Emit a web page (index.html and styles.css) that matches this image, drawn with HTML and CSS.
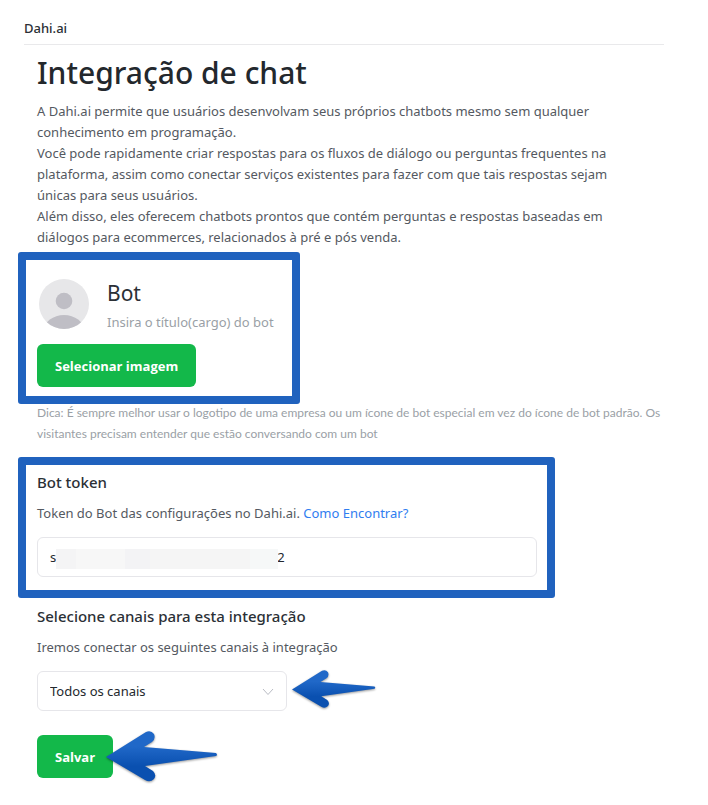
FILE: index.html
```
<!DOCTYPE html>
<html lang="pt-BR">
  <head>
    <meta charset="UTF-8" />
    <meta name="viewport" content="width=device-width, initial-scale=1.0" />
    <title>Dahi.ai - Integração de chat</title>
    <link rel="stylesheet" href="styles.css">
  </head>

  <body>
    <header class="topbar">Dahi.ai</header>

    <main class="content">
      <h1>Integração de chat</h1>
      <div class="description">
        <p>A Dahi.ai permite que usuários desenvolvam seus próprios chatbots mesmo sem qualquer conhecimento em programação.</p>
        <p>Você pode rapidamente criar respostas para os fluxos de diálogo ou perguntas frequentes na plataforma, assim como conectar serviços existentes para fazer com que tais respostas sejam únicas para seus usuários.</p>
        <p>Além disso, eles oferecem chatbots prontos que contém perguntas e respostas baseadas em diálogos para ecommerces, relacionados à pré e pós venda.</p>
      </div>

      <section class="highlight bot">
        <div class="bot-info">
          <svg class="avatar" viewBox="0 0 50 50" aria-hidden="true">
            <clipPath id="round"><circle cx="25" cy="25" r="25" /></clipPath>
            <g clip-path="url(#round)">
              <rect width="50" height="50" fill="#e7e7e9" />
              <circle cx="25" cy="22" r="8.3" fill="#bfbec5" />
              <ellipse cx="25" cy="51" rx="20" ry="15" fill="#bfbec5" />
            </g>
          </svg>
          <div>
            <h2 class="bot-name">Bot</h2>
            <p class="bot-role">Insira o título(cargo) do bot</p>
          </div>
        </div>
        <button class="btn" type="button">Selecionar imagem</button>
      </section>
      <p class="hint">Dica: É sempre melhor usar o logotipo de uma empresa ou um ícone de bot especial em vez do ícone de bot padrão. Os visitantes precisam entender que estão conversando com um bot</p>

      <section class="highlight token">
        <label class="label" for="token">Bot token</label>
        <p class="text">Token do Bot das configurações no Dahi.ai. <a href="#">Como Encontrar?</a></p>
        <div class="token-field">
          <input id="token" type="text" value="s&emsp;&emsp;&emsp;&emsp;&emsp;&emsp;&emsp;&emsp;&emsp;&emsp;&emsp;&emsp;&emsp;&emsp;&emsp;&emsp;&emsp;2">
          <span class="mask"></span>
        </div>
      </section>

      <section class="channels">
        <label class="label" for="channels">Selecione canais para esta integração</label>
        <p class="text">Iremos conectar os seguintes canais à integração</p>
        <div class="select">
          <select id="channels">
            <option>Todos os canais</option>
          </select>
          <svg class="chevron" viewBox="0 0 12 8" aria-hidden="true"><path d="M1 1l5 5.500L11 1" /></svg>
          <svg class="arrow arrow-select" viewBox="0 0 112 52" aria-hidden="true">
            <defs>
              <linearGradient id="blue" x1="0" y1="0" x2="0" y2="1">
                <stop offset="0.300" stop-color="#2068c8" />
                <stop offset="0.700" stop-color="#0a50b0" />
              </linearGradient>
            </defs>
            <path fill="url(#blue)" d="M0 26L40 1Q45-1 48 3Q50 8 46 11L38 16L110 22Q112 24 110 25L39 35L47 40Q51 44 48 48Q44 52 39 49Z" />
          </svg>
        </div>
      </section>

      <div class="actions">
        <button class="btn" type="submit">Salvar</button>
        <svg class="arrow arrow-save" viewBox="0 0 112 52" aria-hidden="true">
          <path fill="url(#blue)" d="M0 26L40 1Q45-1 48 3Q50 8 46 11L38 16L110 22Q112 24 110 25L39 35L47 40Q51 44 48 48Q44 52 39 49Z" />
        </svg>
      </div>
    </main>
  </body>
</html>
```
FILE: styles.css
```
* {
  box-sizing: border-box;
}

body {
  margin: 0;
  background: #fff;
  color: #545961;
  font: 13px/21px "Noto Sans", "Open Sans", sans-serif;
}

h1,
h2,
p {
  margin: 0;
}

.topbar {
  margin: 0 44px 0 24px;
  padding: 18px 0 5px;
  border-bottom: 1px solid #e9e9eb;
  color: #2b3036;
  font-weight: 500;
}

.content {
  padding: 7px 30px 24px 37px;
}

h1 {
  margin-bottom: 8px;
  color: #23282d;
  font-size: 30px;
  font-weight: 500;
  line-height: 41px;
}

.description {
  max-width: 590px;
}

/* thick frame hangs outside the text column */
.highlight {
  width: fit-content;
  max-width: 100%;
  margin-left: -19px;
  border: 8px solid #2062be;
  border-radius: 3px;
}

.bot {
  margin-top: 4px;
  padding: 17px 18px 9px 11px;
}

.bot-info {
  display: flex;
  gap: 18px;
  margin-bottom: 13px;
}

.avatar {
  width: 50px;
  height: 50px;
  margin: 2px 0 0 2px;
}

.bot-name {
  margin-bottom: 4px;
  color: #2b3036;
  font-size: 21px;
  font-weight: 400;
  line-height: 32px;
}

.bot-role {
  line-height: 18px;
  color: #9a9fa6;
}

.btn {
  height: 43px;
  padding: 0 18px;
  border: none;
  border-radius: 6px;
  background: #13b84a;
  color: #fff;
  font: bold 13px "Open Sans", "Noto Sans", sans-serif;
  cursor: pointer;
}

.hint {
  margin-top: -2px;
  color: #9a9fa6;
  font-family: Lato, "Open Sans", sans-serif;
  font-size: 12px;
}

.token {
  margin-top: 13px;
  padding: 7px 10px 13px 11px;
}

.label {
  display: block;
  margin-bottom: 10px;
  color: #2b3036;
  font-size: 15px;
  font-weight: 500;
}

.text {
  margin-bottom: 13px;
}

.text a {
  color: #2f7df0;
  text-decoration: none;
}

.token-field {
  position: relative;
}

.token-field input,
.select select {
  display: block;
  width: 500px;
  max-width: 100%;
  height: 40px;
  padding: 0 12px;
  border: 1px solid #e6e6ea;
  border-radius: 6px;
  background: #fff;
  color: #23282d;
  font: inherit;
}

/* covers the secret part of the token */
.mask {
  position: absolute;
  top: 12px;
  left: 19px;
  width: 222px;
  height: 20px;
  background: linear-gradient(90deg, #f4f4f5 0 20px, #f7f7f7 20px 69px, #f3f3f5 69px 94px, #f5f5f5 94px 194px, #f6f8f8 194px);
}

.channels {
  margin-top: 8px;
}

.select {
  position: relative;
  width: 250px;
}

.select select {
  width: 100%;
  appearance: none;
}

.chevron {
  position: absolute;
  top: 17px;
  right: 13px;
  width: 12px;
  height: 8px;
  fill: none;
  stroke: #b9bcc4;
  pointer-events: none;
}

.actions {
  position: relative;
  width: fit-content;
  margin-top: 24px;
}

.arrow {
  position: absolute;
  filter: drop-shadow(0 1px 1px #0006);
  pointer-events: none;
}

.arrow-select {
  top: -2px;
  left: 255px;
  width: 84px;
  height: 41px;
}

.arrow-save {
  top: -4px;
  left: 69px;
  width: 112px;
  height: 52px;
}
```
